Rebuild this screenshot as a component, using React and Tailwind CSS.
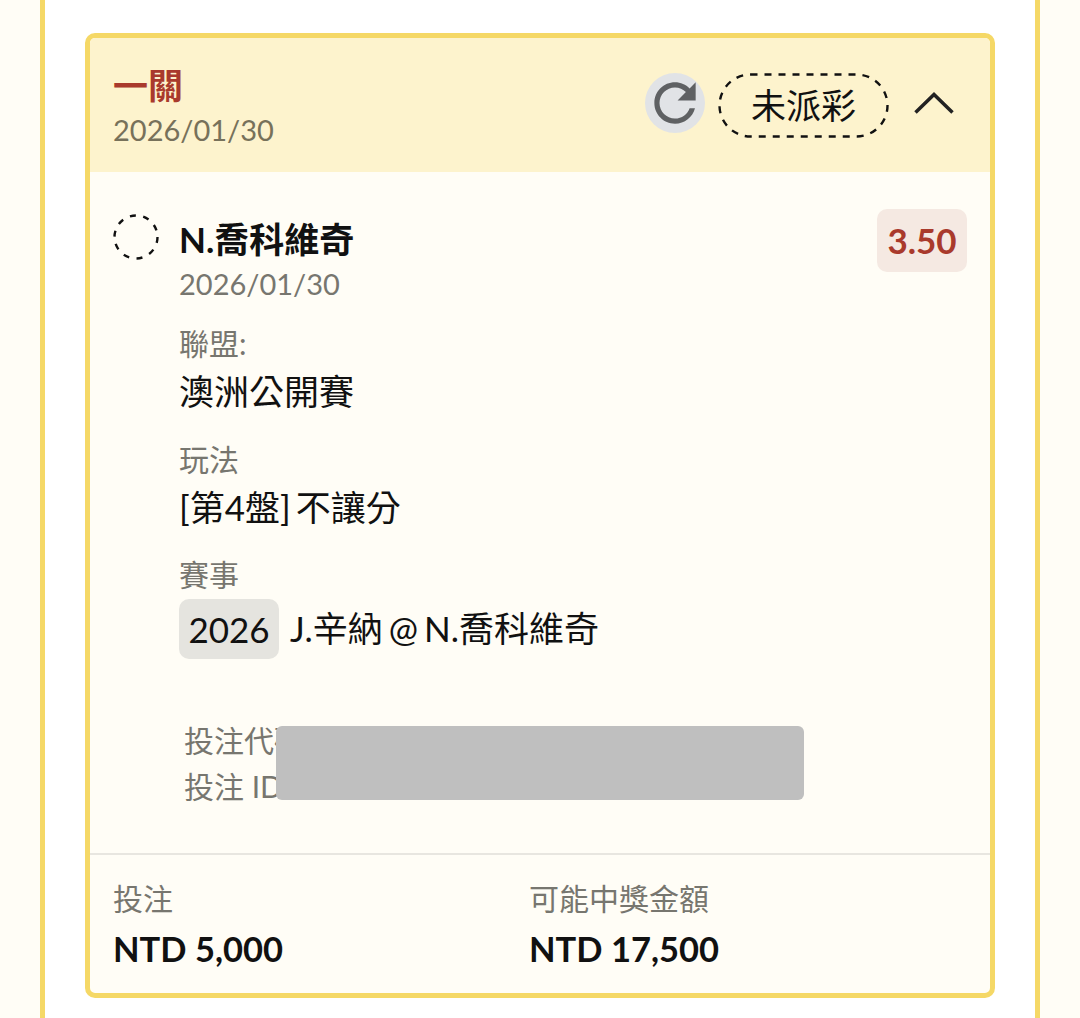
import React from 'react';

const Field = ({ label, children, className = '' }) => (
  <div className={className}>
    <div className="text-[30px] leading-[44px] text-[#77766f]">{label}</div>
    <div className="text-[35px] leading-[52px] text-[#111111] [word-spacing:-4px]">{children}</div>
  </div>
);

const App = () => {
  return (
    <div className="h-[1018px] overflow-hidden bg-[#fffdf6] px-10 font-[Lato,'Noto_Sans_CJK_TC',sans-serif]">
      <div className="h-full border-x-[5px] border-[#f5d866] bg-white px-10 pt-[33px]">
        <div className="overflow-hidden rounded-[10px] border-[5px] border-[#f5d866] bg-[#fffdf6]">
          {/* Header */}
          <div className="flex h-[134px] items-center justify-between bg-[#fdf3cd] pl-[23px] pr-[36px]">
            <div className="mt-[23px] self-start">
              <div className="text-[35px] font-bold leading-[48px] text-[#a93a2c]">一關</div>
              <div className="mt-[2px] text-[29px] leading-[38px] text-[#77715a]">2026/01/30</div>
            </div>
            <div className="flex items-center">
              <button className="mb-[4px] flex h-[60px] w-[60px] items-center justify-center rounded-full bg-[#e1e3e6]">
                <svg viewBox="0 0 24 24" className="h-[62px] w-[62px] shrink-0" fill="#5f6163">
                  <path d="M17.65 6.35C16.2 4.9 14.21 4 12 4c-4.42 0-7.99 3.58-7.99 8s3.57 8 7.99 8c3.73 0 6.84-2.55 7.73-6h-2.08c-.82 2.33-3.04 4-5.65 4-3.31 0-6-2.69-6-6s2.69-6 6-6c1.66 0 3.14.69 4.22 1.78L13 11h7V4l-2.35 2.35z" />
                </svg>
              </button>
              <div className="relative ml-[13px] flex h-[65px] w-[171px] items-center justify-center text-[35px] text-[#111111]">
                <svg viewBox="0 0 171 65" className="absolute inset-0 h-full w-full" fill="none" stroke="#111111" strokeWidth="2.4">
                  <rect x="1.5" y="1.5" width="168" height="62" rx="31" strokeDasharray="7 7" />
                </svg>
                未派彩
              </div>
              <svg viewBox="0 0 40 22" className="mb-[5px] ml-[25px] h-[22px] w-[40px]" fill="none" stroke="#222222" strokeWidth="3.5">
                <path d="M1.5 20.5 20 2.5l18.5 18" />
              </svg>
            </div>
          </div>

          {/* Selection */}
          <div className="pl-[23px] pr-[23px] pt-[37px]">
            <div className="flex items-start">
              <svg viewBox="0 0 46 46" className="mt-[5px] h-[46px] w-[46px] shrink-0" fill="none" stroke="#111111" strokeWidth="2.4">
                <circle cx="23" cy="23" r="21.5" strokeDasharray="6 7.5" />
              </svg>
              <div className="ml-[20px] min-w-0 flex-1">
                <div className="flex items-start justify-between">
                  <div>
                    <div className="mt-[8px] text-[35px] font-bold leading-[44px] text-[#111111]">N.喬科維奇</div>
                    <div className="mt-[1px] text-[29px] leading-[44px] text-[#77766f]">2026/01/30</div>
                  </div>
                  <div className="flex h-[63px] w-[90px] items-center justify-center rounded-[10px] bg-[#f5e9e2] text-[35px] font-bold text-[#a93a2c]">
                    3.50
                  </div>
                </div>
                <Field label="聯盟:" className="mt-[15px]">澳洲公開賽</Field>
                <Field label="玩法" className="mt-[20px]">[第4盤] 不讓分</Field>
                <div className="mt-[19px] text-[30px] leading-[44px] text-[#77766f]">賽事</div>
                <div className="mt-[3px] flex items-center text-[35px] text-[#111111]">
                  <span className="flex h-[60px] w-[100px] items-center justify-center rounded-[10px] bg-[#e5e4df]">2026</span>
                  <span className="mb-[2px] ml-[11px] [word-spacing:-3px]">J.辛納 @ N.喬科維奇</span>
                </div>

                {/* Bet codes, masked in the capture */}
                <div className="relative ml-[5px] mt-[58px] h-[92px] text-[30px] leading-[46px] text-[#77766f]">
                  <div>投注代碼</div>
                  <div>投注 ID</div>
                  <div className="absolute left-[92px] top-[9px] h-[74px] w-[528px] rounded-[6px] bg-[#bfbfbf]" />
                </div>
              </div>
            </div>
          </div>

          {/* Totals */}
          <div className="mt-[44px] grid h-[140px] grid-cols-[416px_1fr] border-t-2 border-[#e8e6e0] pl-[23px] pt-[19px]">
            <div>
              <div className="text-[30px] leading-[49px] text-[#77766f]">投注</div>
              <div className="text-[34.5px] font-bold leading-[52px] text-[#111111]">NTD 5,000</div>
            </div>
            <div>
              <div className="text-[30px] leading-[49px] text-[#77766f]">可能中獎金額</div>
              <div className="text-[34.5px] font-bold leading-[52px] text-[#111111]">NTD 17,500</div>
            </div>
          </div>
        </div>
      </div>
    </div>
  );
};

export default App;
